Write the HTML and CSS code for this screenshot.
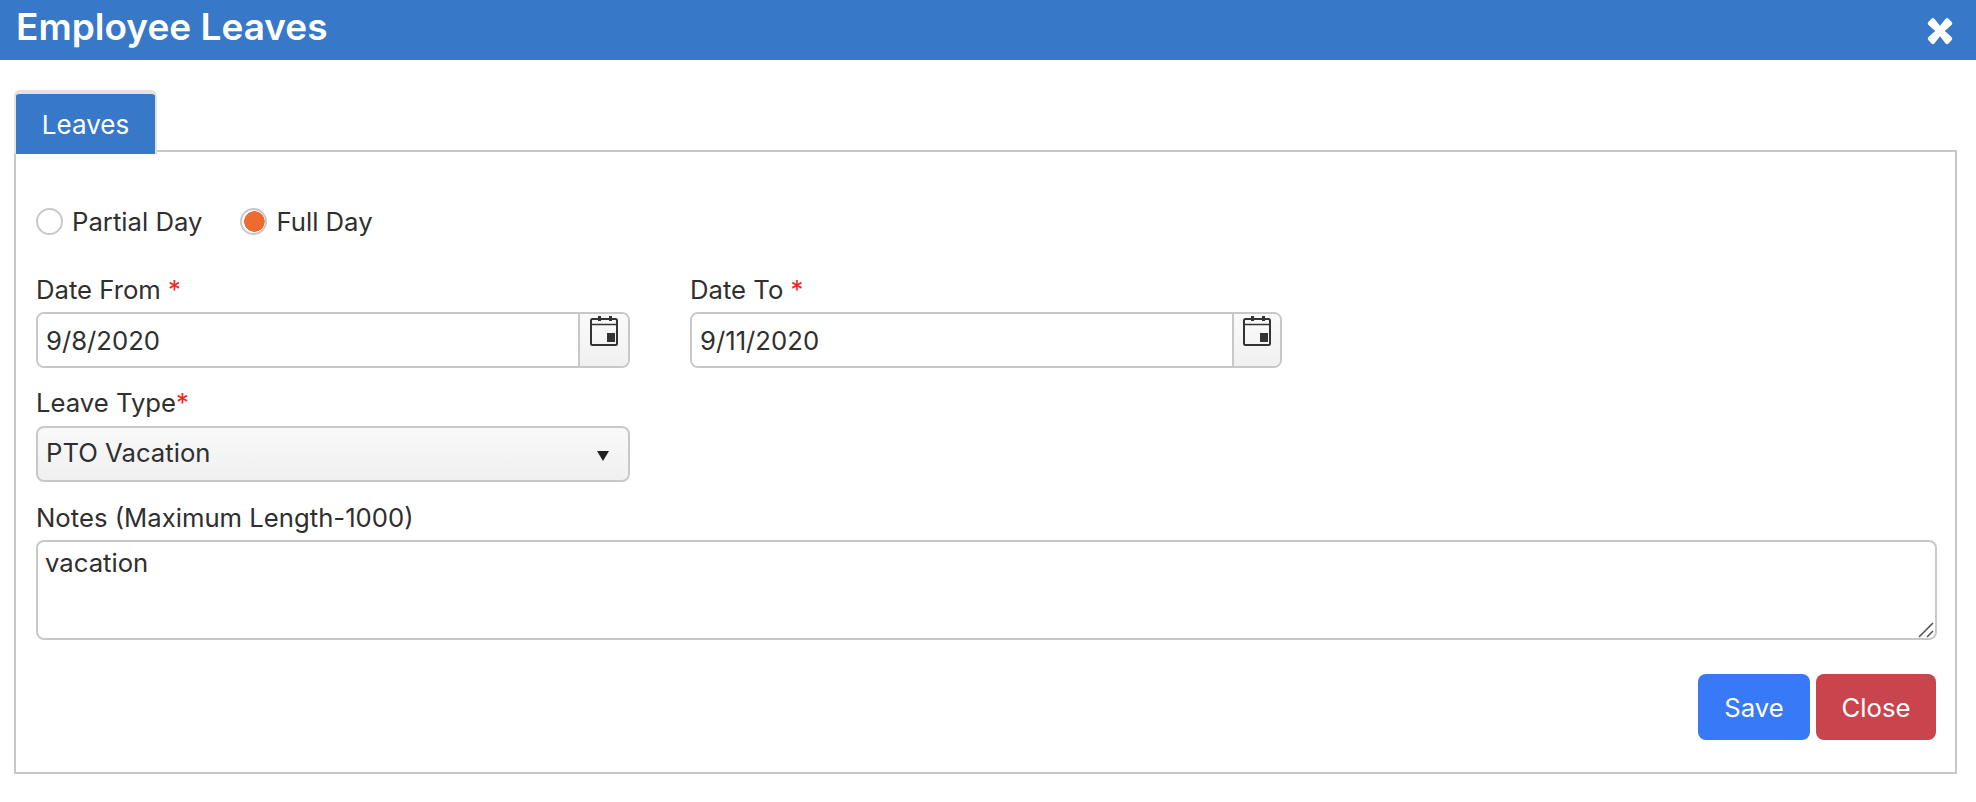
FILE: index.html
```html
<!DOCTYPE html>
<html lang="en">
<head>
<meta charset="utf-8">
<title>Employee Leaves</title>
<link rel="stylesheet" href="styles.css">
</head>
<body>
<header class="titlebar">
  <h1 class="title">Employee Leaves</h1>
  <svg class="close-x" viewBox="0 0 26 26" preserveAspectRatio="none" aria-hidden="true"><path d="M13 8.2 18.6 1.6a2 2 0 0 1 2.9 0l3 2.9a2 2 0 0 1 0 2.9L17.8 13l6.7 5.6a2 2 0 0 1 0 2.9l-3 3a2 2 0 0 1-2.9 0L13 17.8l-5.6 6.7a2 2 0 0 1-2.9 0l-3-3a2 2 0 0 1 0-2.9L8.200 13 1.500 7.400a2 2 0 0 1 0-2.900l3-2.900a2 2 0 0 1 2.900 0z" fill="#fff"/></svg>
</header>
<main class="content">
  <div class="tabs"><div class="tab">Leaves</div></div>
  <form class="panel">
    <div class="radios">
      <label class="radio"><input type="radio" name="span"><span>Partial Day</span></label>
      <label class="radio"><input type="radio" name="span" checked><span>Full Day</span></label>
    </div>
    <div class="dates">
      <div>
        <label class="lbl">Date From <b class="req">*</b></label>
        <div class="datebox">
          <input class="dateinput" type="text" value="9/8/2020">
          <span class="addon">
            <svg class="cal" viewBox="0 0 28 30" aria-hidden="true"><rect x="1" y="3" width="26" height="26" rx="1.500" fill="none" stroke="#333" stroke-width="2"/><path d="M1 8.500h26" stroke="#333" stroke-width="1.500"/><path d="M8 0h3v5H8zM19 0h3v5h-3zM17 17h8v9h-8z" fill="#333"/></svg>
          </span>
        </div>
      </div>
      <div>
        <label class="lbl">Date To <b class="req">*</b></label>
        <div class="datebox">
          <input class="dateinput" type="text" value="9/11/2020">
          <span class="addon addon-narrow">
            <svg class="cal" viewBox="0 0 28 30" aria-hidden="true"><rect x="1" y="3" width="26" height="26" rx="1.500" fill="none" stroke="#333" stroke-width="2"/><path d="M1 8.500h26" stroke="#333" stroke-width="1.500"/><path d="M8 0h3v5H8zM19 0h3v5h-3zM17 17h8v9h-8z" fill="#333"/></svg>
          </span>
        </div>
      </div>
    </div>
    <div class="type-field">
      <label class="lbl">Leave Type<b class="req">*</b></label>
      <div class="selectbox">
        <select class="select"><option>PTO Vacation</option></select>
        <svg class="caret" viewBox="0 0 12 10" aria-hidden="true"><path d="M0 0h12L6 10z" fill="#222"/></svg>
      </div>
    </div>
    <div class="notes-field">
      <label class="lbl">Notes (Maximum Length-1000)</label>
      <div class="notesbox">
        <textarea class="notes">vacation</textarea>
        <svg class="grip" viewBox="0 0 16 16" aria-hidden="true"><path d="M1 15 15 1M9 15l6-6" stroke="#555" stroke-width="1.600" fill="none"/></svg>
      </div>
    </div>
    <div class="actions">
      <button type="button" class="btn save">Save</button>
      <button type="button" class="btn close">Close</button>
    </div>
  </form>
</main>
</body>
</html>
```

FILE: styles.css
```css
* { box-sizing: border-box; }
html, body { margin: 0; height: 100%; background: #fff; }
body { font-family: Inter, "Noto Sans", sans-serif; font-size: 25.7px; color: #2f2f2f; overflow: hidden; }

.titlebar { height: 60px; background: #3778c8; display: flex; align-items: flex-start; justify-content: space-between; padding: 0 23px 0 16px; }
.title { margin: 4px 0 0; font-size: 37px; line-height: 46px; font-weight: 600; color: #fff; }
.close-x { width: 26px; height: 28px; margin-top: 17px; }

.content { padding: 30px 19px 0 14px; }
.tabs { display: flex; position: relative; z-index: 1; height: 64px; margin-bottom: -4px; }
.tab { width: 143px; height: 64px; background: #3778c8; color: #fff; border: 2px solid #e2e2e2; border-width: 4px 2px 0; border-radius: 6px 6px 0 0; display: flex; align-items: center; justify-content: center; font-size: 26px; }

.panel { height: 624px; border: 2px solid #c8c8c8; padding: 0 19px 0 20px; display: flex; flex-direction: column; }
.radios { display: flex; gap: 38px; margin-top: 55px; height: 28px; align-items: center; }
.radio { display: flex; align-items: center; gap: 9px; line-height: 28px; }
.radio span { position: relative; top: 1px; }
.radio input { appearance: none; width: 27px; height: 27px; margin: 0; border: 2px solid #c8c8c8; border-radius: 50%; background: #fff; }
.radio input:checked { background: radial-gradient(circle at 54% 50%, #ee6b2f 0 10px, #fff 10.5px); }

.dates { display: grid; grid-template-columns: 594px 592px; gap: 60px; margin-top: 41px; }
.lbl { display: block; height: 36px; line-height: 27px; }
.req { color: #f0271c; font-weight: 400; }
.datebox { height: 56px; display: flex; border: 2px solid #c8c8c8; border-radius: 8px; overflow: hidden; }
.dateinput { flex: 1; min-width: 0; border: 0; outline: 0; padding: 0 8px; font: inherit; color: inherit; background: #fff; }
.addon { width: 50px; flex: none; border-left: 2px solid #c8c8c8; background: linear-gradient(#fafafa, #f0f0f0); display: flex; justify-content: center; align-items: flex-start; padding-top: 2px; }
.addon-narrow { width: 48px; }
.cal { width: 28px; height: 30px; }

.type-field { width: 594px; margin-top: 22px; }
.type-field .lbl { line-height: 26px; }
.selectbox { position: relative; height: 56px; }
.select { appearance: none; width: 100%; height: 100%; border: 2px solid #c8c8c8; border-radius: 8px; padding: 0 8px 4px; font: inherit; color: inherit; background: linear-gradient(#f9f9f9, #f0f0f0); outline: 0; }
.caret { position: absolute; right: 21px; top: 25px; width: 12px; height: 10px; pointer-events: none; }

.notes-field { margin-top: 22px; }
.notesbox { position: relative; width: 1901px; height: 100px; }
.notes { display: block; width: 100%; height: 100%; border: 2px solid #c8c8c8; border-radius: 8px; padding: 5px 7px; font: inherit; color: inherit; outline: 0; resize: none; }
.grip { position: absolute; right: 3px; bottom: 2px; width: 16px; height: 16px; }

.actions { display: flex; justify-content: flex-end; gap: 6px; margin-top: 34px; }
.btn { height: 66px; border: 0; border-radius: 8px; color: #fff; font: inherit; padding: 0; }
.save { width: 112px; background: #3779f6; }
.close { width: 120px; background: #c9444d; }
```
